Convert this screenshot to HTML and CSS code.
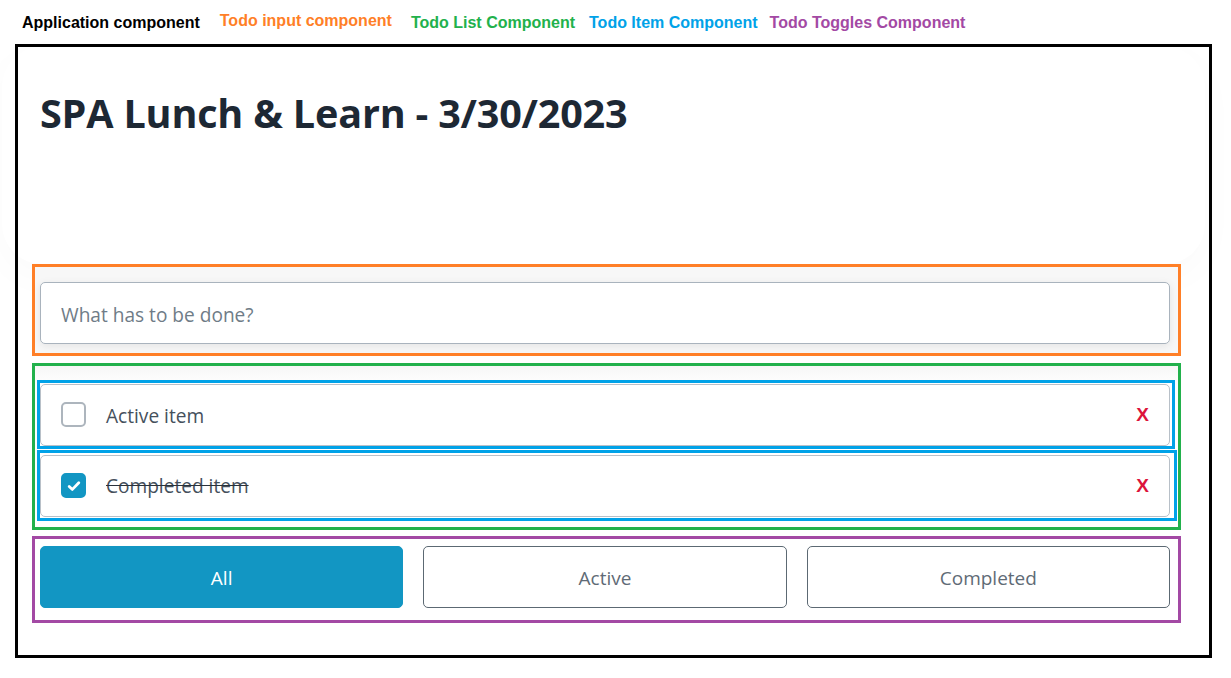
FILE: index.html
```html
<!DOCTYPE html>
<html lang="en">
<head>
<meta charset="utf-8">
<title>SPA Lunch &amp; Learn</title>
<link rel="stylesheet" href="styles.css">
</head>
<body>
<div class="legend">
  <span class="lbl lbl-app">Application component</span>
  <span class="lbl lbl-input">Todo input component</span>
  <span class="lbl lbl-list">Todo List Component</span>
  <span class="lbl lbl-item">Todo Item Component</span>
  <span class="lbl lbl-toggles">Todo Toggles Component</span>
</div>
<div class="app">
  <header class="hero">
    <h1 class="title">SPA Lunch &amp; Learn - 3/30/2023</h1>
  </header>
  <section class="box box-input">
    <div class="input-wrap">
      <input class="todo-input" type="text" placeholder="What has to be done?">
    </div>
  </section>
  <section class="box box-list">
    <div class="item-frame frame-1">
      <div class="item">
        <span class="check"></span>
        <span class="item-text">Active item</span>
        <span class="remove">X</span>
      </div>
    </div>
    <div class="item-frame frame-2">
      <div class="item">
        <span class="check checked">
          <svg viewBox="0 0 16 16" width="16" height="16"><path d="M3.2 8.4l3.2 3 6.4-6.6" fill="none" stroke="#fff" stroke-width="2.8" stroke-linecap="round" stroke-linejoin="round"/></svg>
        </span>
        <span class="item-text done">Completed item</span>
        <span class="remove">X</span>
      </div>
    </div>
  </section>
  <section class="box box-toggles">
    <button class="tog tog-on">All</button>
    <button class="tog">Active</button>
    <button class="tog">Completed</button>
  </section>
</div>
</body>
</html>
```

FILE: styles.css
```css
* { box-sizing: border-box; }
html, body { margin: 0; padding: 0; background: #fff; }
body { font-family: "Open Sans", "Noto Sans", sans-serif; }

.legend {
  display: flex;
  height: 44px;
  padding: 14px 0 0 22px;
  font-family: "Liberation Sans", Arial, sans-serif;
  font-weight: 700;
  font-size: 16px;
  line-height: 18px;
}
.lbl-app { color: #000; }
.lbl-input { color: #ff7f27; margin-left: 20px; margin-top: -2px; }
.lbl-list { color: #22b14c; margin-left: 19px; }
.lbl-item { color: #00a2e8; margin-left: 14px; }
.lbl-toggles { color: #a349a4; margin-left: 12px; }

.app {
  margin-left: 15px;
  width: 1197px;
  height: 614px;
  border: 3px solid #000;
  display: flex;
  flex-direction: column;
}

.hero {
  height: 217px;
  padding: 41px 0 0 38px;
  margin: 0 4px 0 -16px;
  box-shadow: 0 12px 40px rgba(0,0,0,0.025);
  border-radius: 40px;
}
.title {
  margin: 0;
  font-family: "Open Sans", "Noto Sans", sans-serif;
  font-weight: 700;
  font-size: 39.6px;
  line-height: 50px;
  color: #1d2834;
  letter-spacing: -0.2px;
}

.box {
  margin-left: 14px;
  width: 1149px;
  border: 3px solid;
}
.box-input {
  border-color: #ff7f27;
  padding: 15px 8px 9px 5px;
  background: #f7f7f7;
}
.input-wrap {
  box-shadow: 0 2px 8px rgba(0,0,0,0.08);
  border-radius: 5px;
}
.todo-input {
  display: block;
  width: 100%;
  height: 62px;
  border: 1px solid #a9b3bd;
  border-radius: 5px;
  padding: 3px 20px 0;
  font-family: "Open Sans", "Noto Sans", sans-serif;
  font-size: 19.1px;
  color: #495057;
  background: #fff;
  outline: none;
}
.todo-input::placeholder { color: #6f7c87; }

.box-list {
  margin-top: 7px;
  border-color: #22b14c;
  padding: 14px 0 6px 2px;
  background: linear-gradient(#f7f7f7, #fff 20px);
}
.item-frame {
  border: 3px solid #00a2e8;
}
.frame-1 { padding: 1px 2px 0 0; margin-right: 3px; }
.frame-2 { padding: 2px 4px 1px 0; margin-right: 1px; margin-top: 1px; }
.item {
  height: 62px;
  display: flex;
  align-items: center;
  border: 1px solid #b8c0c8;
  border-radius: 5px;
  padding: 0 20px 0 20px;
  background: #fff;
}
.check {
  width: 25px;
  height: 25px;
  flex: none;
  border: 2px solid #adb5bd;
  border-radius: 5px;
  display: flex;
  align-items: center;
  justify-content: center;
  margin-top: -1px;
}
.check.checked {
  background: #1296c3;
  border-color: #1296c3;
}
.item-text {
  margin-left: 20px;
  flex: 1;
  font-size: 19.1px;
  color: #45505c;
  padding-top: 1px;
}
.item-text.done { text-decoration: line-through; text-decoration-color: #2a323a; padding-top: 0; }
.remove {
  font-family: "Liberation Sans", Arial, sans-serif;
  font-weight: 700;
  font-size: 19px;
  color: #dc143c;
}

.box-toggles {
  margin-top: 6px;
  border-color: #a349a4;
  padding: 7px 8px 12px 5px;
  display: grid;
  grid-template-columns: repeat(3, 1fr);
  column-gap: 20px;
}
.tog {
  height: 62px;
  border: 1px solid #5c6973;
  border-radius: 5px;
  background: #fff;
  font-family: "Open Sans", "Noto Sans", sans-serif;
  font-size: 19px;
  color: #5f6b76;
  padding: 2px 0 0;
}
.tog-on {
  background: #1296c3;
  border-color: #1296c3;
  color: #fff;
}
```
